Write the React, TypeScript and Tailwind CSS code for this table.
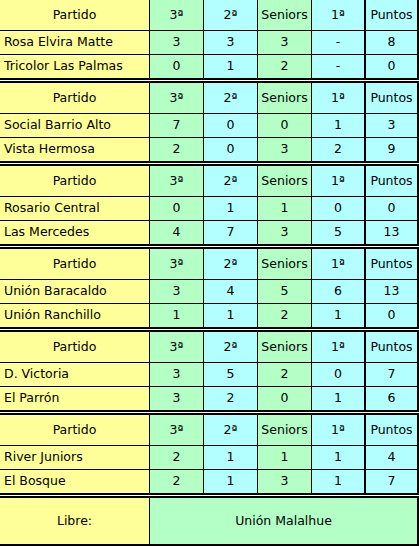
const MATCHES: [string, string, string, string, string, string][][] = [
  [
    ["Rosa Elvira Matte", "3", "3", "3", "-", "8"],
    ["Tricolor Las Palmas", "0", "1", "2", "-", "0"],
  ],
  [
    ["Social Barrio Alto", "7", "0", "0", "1", "3"],
    ["Vista Hermosa", "2", "0", "3", "2", "9"],
  ],
  [
    ["Rosario Central", "0", "1", "1", "0", "0"],
    ["Las Mercedes", "4", "7", "3", "5", "13"],
  ],
  [
    ["Unión Baracaldo", "3", "4", "5", "6", "13"],
    ["Unión Ranchillo", "1", "1", "2", "1", "0"],
  ],
  [
    ["D. Victoria", "3", "5", "2", "0", "7"],
    ["El Parrón", "3", "2", "0", "1", "6"],
  ],
  [
    ["River Juniors", "2", "1", "1", "1", "4"],
    ["El Bosque", "2", "1", "3", "1", "7"],
  ],
];

const HEAD = ["Partido", "3ª", "2ª", "Seniors", "1ª", "Puntos"];

// width + colour + right border of each column
const COLS = [
  "w-[150px] bg-[#ffff99] border-r border-black",
  "w-[54px] bg-[#b3ffc6] border-r border-black",
  "w-[54px] bg-[#b3ffff] border-r border-black",
  "w-[54px] bg-[#b3ffc6] border-r border-black",
  "w-[54px] bg-[#b3ffff] border-r-2 border-black",
  "w-[51px] bg-[#b3ffff]",
];

function Row({ cells, head, last }: { cells: string[]; head?: boolean; last?: boolean }) {
  const h = head ? "h-[31px] border-b" : last ? "h-[23px]" : "h-[24px] border-b";
  return (
    <div className={`flex border-black ${h}`}>
      {cells.map((c, i) => (
        <div
          key={i}
          className={`${COLS[i]} flex items-center ${
            i === 0 && !head ? "justify-start pl-[4px]" : "justify-center"
          }`}
        >
          {c}
        </div>
      ))}
    </div>
  );
}

export default function App() {
  return (
    <div
      className="w-[421px] -ml-[2px] -mt-[2px] flex flex-col gap-px bg-white text-[12.5px] text-black overflow-hidden"
      style={{ fontFamily: '"DejaVu Sans", Verdana, sans-serif' }}
    >
      {MATCHES.map((pair, t) => (
        <div key={t} className="border-2 border-black">
          <Row cells={HEAD} head />
          <Row cells={pair[0]} />
          <Row cells={pair[1]} last />
        </div>
      ))}
      <div className="border-2 border-black flex h-[50px]">
        <div className="w-[150px] bg-[#ffff99] border-r border-black flex items-center justify-center">
          Libre:
        </div>
        <div className="flex-1 bg-[#b3ffc6] flex items-center justify-center">Unión Malalhue</div>
      </div>
    </div>
  );
}
